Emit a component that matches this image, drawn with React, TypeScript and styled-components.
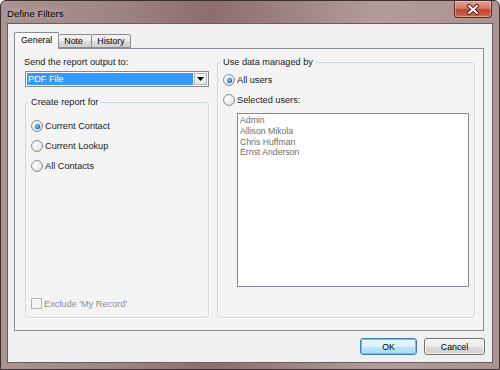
import styled, { createGlobalStyle } from 'styled-components';

const GlobalStyle = createGlobalStyle`
  html, body {
    margin: 0;
    padding: 0;
  }
  body {
    font-family: 'Liberation Sans', Arial, sans-serif;
    font-size: 9.2px;
    color: #1a1a1a;
  }
`;

const users = ['Admin', 'Allison Mikola', 'Chris Huffman', 'Ernst Anderson'];

const Radio = ({ label, checked }: { label: string; checked?: boolean }) => (
  <OptionRow>
    <RadioMark $checked={checked} />
    <span>{label}</span>
  </OptionRow>
);

const App = () => {
  return (
    <>
      <GlobalStyle />
      <Window>
        <TitleBar>
          <Title>Define Filters</Title>
          <CloseButton>
            <svg width='14' height='11' viewBox='0 0 14 11'>
              <path d='M3 2 L11 9 M11 2 L3 9' stroke='#5a2119' strokeWidth='4' strokeLinecap='round' />
              <path d='M3 2 L11 9 M11 2 L3 9' stroke='#ffffff' strokeWidth='2' strokeLinecap='round' />
            </svg>
          </CloseButton>
        </TitleBar>
        <Client>
          <TabStrip>
            <Tab $active>General</Tab>
            <Tab>Note</Tab>
            <Tab>History</Tab>
          </TabStrip>
          <TabPanel>
            <LeftColumn>
              <FieldLabel>Send the report output to:</FieldLabel>
              <Combo>
                <ComboValue>PDF File</ComboValue>
                <ComboButton>
                  <svg width='7' height='4' viewBox='0 0 7 4'>
                    <path d='M0 0 H7 L3.5 4 Z' fill='#000' />
                  </svg>
                </ComboButton>
              </Combo>
              <Group $grow>
                <Legend>Create report for</Legend>
                <Radio label='Current Contact' checked />
                <Radio label='Current Lookup' />
                <Radio label='All Contacts' />
                <CheckRow>
                  <CheckMark />
                  <span>Exclude 'My Record'</span>
                </CheckRow>
              </Group>
            </LeftColumn>
            <UsersGroup>
              <Legend>Use data managed by</Legend>
              <Radio label='All users' checked />
              <Radio label='Selected users:' />
              <UserList>
                {users.map((u) => (
                  <UserItem key={u}>{u}</UserItem>
                ))}
              </UserList>
            </UsersGroup>
          </TabPanel>
          <ButtonRow>
            <DialogButton $default>OK</DialogButton>
            <DialogButton>Cancel</DialogButton>
          </ButtonRow>
        </Client>
      </Window>
    </>
  );
};

export default App;

const Window = styled.div`
  box-sizing: border-box;
  width: 500px;
  height: 370px;
  display: flex;
  flex-direction: column;
  padding: 0 6px 6px;
  border: 1px solid #3e2d2d;
  border-radius: 6px 6px 0 0;
  background: linear-gradient(90deg, #a99492 0%, #9e8685 22%, #8d6d6e 42%, #9a7f80 55%, #b19c9a 75%, #aa9492 100%);
`;

const TitleBar = styled.div`
  height: 22px;
  display: flex;
  justify-content: space-between;
  align-items: flex-start;
`;

const Title = styled.div`
  padding-top: 7px;
  font-size: 9.6px;
  color: #000;
  text-shadow: 0 0 6px rgba(255, 255, 255, 0.7);
`;

const CloseButton = styled.div`
  box-sizing: border-box;
  width: 38px;
  height: 17px;
  margin-right: 1px;
  display: flex;
  align-items: center;
  justify-content: center;
  border: 1px solid #5b2a23;
  border-top: none;
  border-radius: 0 0 4px 4px;
  background: linear-gradient(180deg, #e2a093 0%, #d47a6a 45%, #c0432f 55%, #cf6a4f 100%);
  box-shadow: inset 0 0 0 1px rgba(255, 220, 210, 0.45);
`;

const Client = styled.div`
  flex: 1;
  display: flex;
  flex-direction: column;
  padding: 8px 8px 7px 6px;
  background: #f0f0f0;
  border: 1px solid #6f5c5c;
`;

const TabStrip = styled.div`
  height: 16px;
  display: flex;
  align-items: flex-end;
  position: relative;
  z-index: 1;
`;

const Tab = styled.div<{ $active?: boolean }>`
  box-sizing: border-box;
  height: ${(p) => (p.$active ? '17px' : '14px')};
  margin-bottom: ${(p) => (p.$active ? '-1px' : '0')};
  padding: ${(p) => (p.$active ? '2px 6px 0' : '1px 5px 0')};
  font-size: 8.8px;
  line-height: 11px;
  color: #000;
  border: 1px solid #898c95;
  border-bottom: ${(p) => (p.$active ? 'none' : '1px solid #898c95')};
  border-radius: 2px 2px 0 0;
  background: ${(p) =>
    p.$active ? 'linear-gradient(180deg, #fdfdfd 0%, #f4f4f4 100%)' : 'linear-gradient(180deg, #f2f2f2 0%, #ebebeb 50%, #dddddd 51%, #cfcfcf 100%)'};
  & + & {
    margin-left: -1px;
  }
  &:nth-child(2) {
    margin-left: 0;
    border-left: none;
    width: 33px;
  }
`;

const TabPanel = styled.div`
  flex: 1;
  display: flex;
  gap: 8px;
  padding: 8px 8px 12px 10px;
  background: #f4f4f4;
  border: 1px solid #898c95;
`;

const LeftColumn = styled.div`
  width: 184px;
  display: flex;
  flex-direction: column;
`;

const FieldLabel = styled.div`
  line-height: 11px;
  margin-left: -1px;
`;

const Combo = styled.div`
  box-sizing: border-box;
  height: 16px;
  margin-top: 3px;
  display: flex;
  border: 1px solid #8a8a8a;
  background: #fff;
`;

const ComboValue = styled.div`
  flex: 1;
  margin: 1px;
  padding-left: 1px;
  background: #3399ff;
  color: #fff;
  line-height: 12px;
`;

const ComboButton = styled.div`
  box-sizing: border-box;
  width: 13px;
  margin: 1px 1px 1px 0;
  display: flex;
  align-items: center;
  justify-content: center;
  background: linear-gradient(180deg, #fafafa, #e4e4e4);
  border: 1px solid #b5b5b5;
`;

const Group = styled.fieldset<{ $grow?: boolean }>`
  flex: ${(p) => (p.$grow ? 1 : 'none')};
  margin: 10px 0 0;
  padding: 8px 0 7px 5px;
  min-width: 0;
  display: flex;
  flex-direction: column;
  border: 1px solid #d0d9de;
  border-radius: 3px;
  box-shadow: 1px 1px 0 #ffffff;
`;

const UsersGroup = styled.fieldset`
  flex: 1;
  margin: 0;
  padding: 2px 5px 30px 5px;
  min-width: 0;
  display: flex;
  flex-direction: column;
  border: 1px solid #d0d9de;
  border-radius: 3px;
  box-shadow: 1px 1px 0 #ffffff;
`;

const Legend = styled.legend`
  margin-left: -2px;
  padding: 0 2px;
  line-height: 11px;
  color: #1a1a1a;
`;

const OptionRow = styled.div`
  height: 20px;
  display: flex;
  align-items: center;
  gap: 2px;
`;

const RadioMark = styled.span<{ $checked?: boolean }>`
  box-sizing: border-box;
  width: 12px;
  height: 12px;
  border-radius: 50%;
  border: 1px solid #8f8f8f;
  background: radial-gradient(circle at 35% 35%, #ffffff 0%, #e8e8e8 60%, #d4d4d4 100%);
  display: flex;
  align-items: center;
  justify-content: center;
  &::after {
    content: '';
    display: ${(p) => (p.$checked ? 'block' : 'none')};
    width: 5px;
    height: 5px;
    border-radius: 50%;
    background: radial-gradient(circle at 40% 40%, #8fd3f7 0%, #2a8ad4 50%, #124c82 100%);
    box-shadow: 0 0 1px #0e3f6c;
  }
`;

const CheckRow = styled.div`
  margin-top: auto;
  height: 13px;
  display: flex;
  align-items: center;
  gap: 2px;
  color: #8d8d8d;
`;

const CheckMark = styled.span`
  box-sizing: border-box;
  width: 11px;
  height: 11px;
  border: 1px solid #b4b4b4;
  background: #f4f4f4;
`;

const UserList = styled.div`
  flex: 1;
  margin: 3px 0 0 14px;
  padding: 1px 2px;
  background: #fff;
  border: 1px solid #828790;
  font-size: 8.7px;
  color: #6d6d6d;
`;

const UserItem = styled.div`
  line-height: 10.8px;
`;

const ButtonRow = styled.div`
  margin-top: 7px;
  margin-right: -1px;
  display: flex;
  justify-content: flex-end;
  gap: 7px;
`;

const DialogButton = styled.div<{ $default?: boolean }>`
  box-sizing: border-box;
  height: 17px;
  width: ${(p) => (p.$default ? '57px' : '61px')};
  display: flex;
  align-items: center;
  justify-content: center;
  font-size: 8.8px;
  color: #000;
  border-radius: 3px;
  border: 1px solid ${(p) => (p.$default ? '#3c7fb1' : '#707070')};
  background: ${(p) =>
    p.$default
      ? 'linear-gradient(180deg, #eaf6fd 0%, #d9f0fc 50%, #bee6fd 51%, #a7d9f5 100%)'
      : 'linear-gradient(180deg, #f2f2f2 0%, #ebebeb 50%, #dddddd 51%, #cfcfcf 100%)'};
  box-shadow: inset 0 0 0 1px ${(p) => (p.$default ? '#48d4fa' : 'rgba(255,255,255,0.7)')};
`;
